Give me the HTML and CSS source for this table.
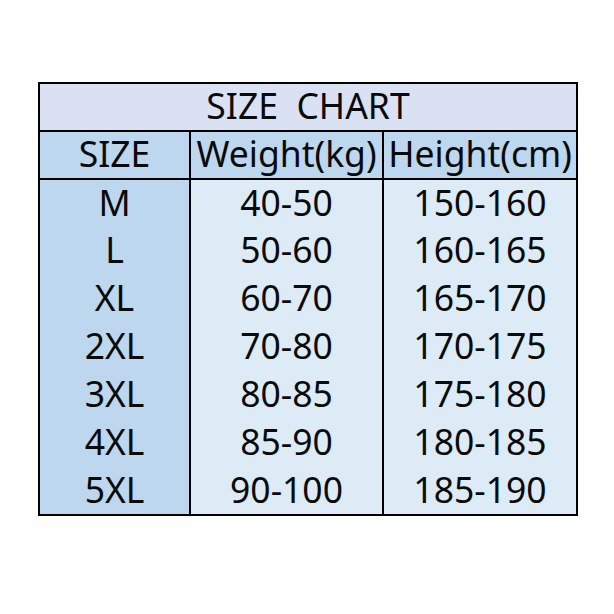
FILE: index.html
```html
<!DOCTYPE html>
<html>
<head>
<meta charset="utf-8">
<link rel="stylesheet" href="styles.css">
</head>
<body>
<div class="page">
<table class="chart">
  <colgroup><col class="c1"><col class="c2"><col class="c3"></colgroup>
  <tr class="title"><td colspan="3">SIZE&nbsp; CHART</td></tr>
  <tr class="head"><td>SIZE</td><td>Weight(kg)</td><td>Height(cm)</td></tr>
  <tr class="body first"><td class="size">M</td><td>40-50</td><td>150-160</td></tr>
  <tr class="body"><td class="size">L</td><td>50-60</td><td>160-165</td></tr>
  <tr class="body"><td class="size">XL</td><td>60-70</td><td>165-170</td></tr>
  <tr class="body"><td class="size">2XL</td><td>70-80</td><td>170-175</td></tr>
  <tr class="body"><td class="size">3XL</td><td>80-85</td><td>175-180</td></tr>
  <tr class="body"><td class="size">4XL</td><td>85-90</td><td>180-185</td></tr>
  <tr class="body"><td class="size">5XL</td><td>90-100</td><td>185-190</td></tr>
</table>
</div>
</body>
</html>
```
FILE: styles.css
```css
html, body { margin: 0; padding: 0; background: #ffffff; }
.page { padding: 82px 0 0 38px; }
.chart {
  border-collapse: collapse;
  table-layout: fixed;
  width: 538px;
  font-family: "Noto Sans", "Open Sans", sans-serif;
  font-size: 35.5px;
  color: #0a0a0a;
  border: 2px solid #000;
}
.c1 { width: 151px; }
.c2 { width: 193px; }
.c3 { width: 194px; }
.chart td {
  height: 48px;
  padding: 0 0 4px 0;
  text-align: center;
  vertical-align: middle;
  line-height: 42px;
  box-sizing: border-box;
  white-space: nowrap;
}
.title td { background: #dae1f3; border-bottom: 2px solid #000; }
.head td { background: #bdd7ee; border-bottom: 2px solid #000; border-right: 2px solid #000; }
.head td:last-child { border-right: 0; }
.body td { background: #ddebf7; border-right: 2px solid #000; }
.body td:last-child { border-right: 0; }
.body td.size { background: #bdd7ee; }
```
